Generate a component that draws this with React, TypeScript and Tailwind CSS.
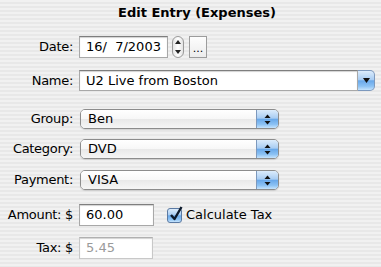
import React from "react";

const font = "font-['Lucida_Grande','DejaVu_Sans',sans-serif] text-[13px] text-black";
const aquaBlue =
  "bg-[linear-gradient(to_bottom,#dcecfc_0%,#a9cdf3_45%,#6aa9ea_52%,#8cc2f4_80%,#c6e4fd_100%)]";

function Label({ children }: { children: React.ReactNode }) {
  return <div className="w-[73px] shrink-0 text-right whitespace-nowrap tracking-[-0.3px]">{children}</div>;
}

function TextField({ value, width, disabled }: { value: string; width: string; disabled?: boolean }) {
  return (
    <div
      className={`${width} h-[22px] flex items-center pl-[6px] whitespace-pre bg-white border border-[#a8a8a8] border-t-[#7e7e7e] shadow-[inset_0_1px_1px_rgba(0,0,0,0.18)] ${
        disabled ? "text-[#9a9a9a] border-[#c8c8c8] border-t-[#b0b0b0]" : ""
      }`}
    >
      {value}
    </div>
  );
}

function UpDown() {
  return (
    <svg width="7" height="11" viewBox="0 0 7 11">
      <path d="M3.5 0.5 L6.5 4 L0.5 4 Z" fill="#111" />
      <path d="M3.5 10.5 L6.5 7 L0.5 7 Z" fill="#111" />
    </svg>
  );
}

function Popup({ value }: { value: string }) {
  return (
    <div className="ml-[1px] w-[199px] h-[20px] flex rounded-[5px] border border-[#8c8c8c] overflow-hidden shadow-[0_1px_1px_rgba(0,0,0,0.12)]">
      <div className="flex-1 flex items-center pl-[7px] bg-[linear-gradient(to_bottom,#ffffff_0%,#f7f7f7_50%,#e9e9e9_52%,#f6f6f6_100%)]">
        {value}
      </div>
      <div className={`w-[22px] flex items-center justify-center border-l border-[#7d99bd] ${aquaBlue}`}>
        <UpDown />
      </div>
    </div>
  );
}

export default function App() {
  return (
    <div
      className={`w-[381px] h-[267px] overflow-hidden bg-[repeating-linear-gradient(to_bottom,#f1f1f1_0px,#f1f1f1_2px,#e8e8e8_2px,#e8e8e8_4px)] ${font}`}
    >
      <div className="h-[25px] flex items-center pl-[118px] font-['DejaVu_Sans',sans-serif] font-bold text-[13px]">
        Edit Entry (Expenses)
      </div>

      {/* Date */}
      <div className="mt-[11px] flex items-center gap-[6px] h-[22px]">
        <Label>Date:</Label>
        <TextField value="16/  7/2003" width="w-[89px]" />
        <div className="ml-[-2px] w-[12px] h-[22px] rounded-full border border-[#9a9a9a] bg-[linear-gradient(to_right,#e4e4e4,#ffffff_50%,#e4e4e4)] flex flex-col items-center justify-between py-[3px]">
          <svg width="6" height="4" viewBox="0 0 6 4">
            <path d="M3 0 L6 4 L0 4 Z" fill="#222" />
          </svg>
          <svg width="6" height="4" viewBox="0 0 6 4">
            <path d="M3 4 L6 0 L0 0 Z" fill="#222" />
          </svg>
        </div>
        <div className="ml-[-1px] w-[18px] h-[22px] border border-[#9c9c9c] bg-[linear-gradient(to_bottom,#fdfdfd,#ececec)] flex items-end justify-center pb-[3px] text-[11px] leading-none">
          ...
        </div>
      </div>

      {/* Name */}
      <div className="mt-[12px] flex items-center gap-[6px] h-[21px]">
        <Label>Name:</Label>
        <div className="flex h-[21px]">
          <div className="w-[279px] h-[21px] flex items-center pl-[6px] bg-white border border-[#a8a8a8] border-t-[#7e7e7e] shadow-[inset_0_1px_1px_rgba(0,0,0,0.18)]">
            U2 Live from Boston
          </div>
          <div
            className={`w-[17px] h-[21px] flex items-center justify-center rounded-r-[5px] border border-l-0 border-[#7d99bd] ${aquaBlue}`}
          >
            <svg width="7" height="5" viewBox="0 0 7 5">
              <path d="M0 0 L7 0 L3.5 5 Z" fill="#111" />
            </svg>
          </div>
        </div>
      </div>

      {/* Group */}
      <div className="mt-[18px] flex items-center gap-[6px] h-[20px]">
        <Label>Group:</Label>
        <Popup value="Ben" />
      </div>

      {/* Category */}
      <div className="mt-[10px] flex items-center gap-[6px] h-[20px]">
        <Label>Category:</Label>
        <Popup value="DVD" />
      </div>

      {/* Payment */}
      <div className="mt-[11px] flex items-center gap-[6px] h-[20px]">
        <Label>Payment:</Label>
        <Popup value="VISA" />
      </div>

      {/* Amount */}
      <div className="mt-[14px] flex items-center gap-[6px] h-[22px]">
        <Label>Amount: $</Label>
        <TextField value="60.00" width="w-[75px]" />
        <div className="ml-[7px] flex items-center gap-[4px]">
          <div
            className={`w-[15px] h-[15px] rounded-[3px] border border-[#5b7aa3] ${aquaBlue} relative`}
          >
            <svg className="absolute left-[1px] top-[-3px]" width="14" height="16" viewBox="0 0 14 16">
              <path d="M2 9 L5.5 13 L12.5 1" stroke="#0d1a2c" strokeWidth="2.4" fill="none" strokeLinejoin="round" />
            </svg>
          </div>
          <span>Calculate Tax</span>
        </div>
      </div>

      {/* Tax */}
      <div className="mt-[11px] flex items-center gap-[6px] h-[22px]">
        <Label>Tax: $</Label>
        <TextField value="5.45" width="w-[74px]" disabled />
      </div>
    </div>
  );
}
